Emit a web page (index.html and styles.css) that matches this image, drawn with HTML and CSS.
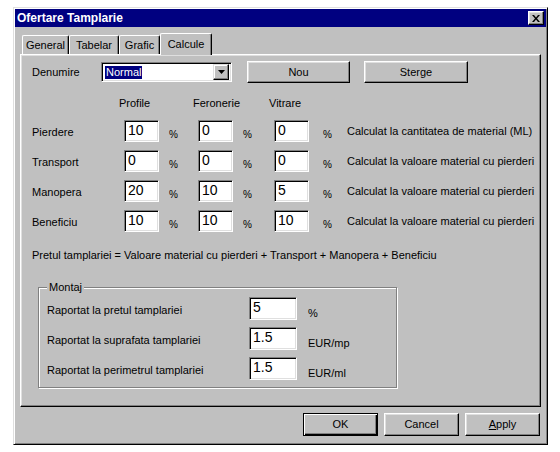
FILE: index.html
```html
<!DOCTYPE html>
<html>
<head>
<meta charset="utf-8">
<link rel="stylesheet" href="styles.css">
</head>
<body>
<div class="window">
  <div class="titlebar">
    <span class="title">Ofertare Tamplarie</span>
    <span class="close"><svg width="8" height="7" viewBox="0 0 8 7"><path d="M0 0h2l2 2.5L6 0h2L5 3.5 8 7H6L4 4.5 2 7H0l3-3.5z" fill="#000"/></svg></span>
  </div>
  <div class="main">
    <div class="tabs">
      <div class="tab t-general">General</div>
      <div class="tab t-tabelar">Tabelar</div>
      <div class="tab t-grafic">Grafic</div>
      <div class="tab t-calcule active">Calcule</div>
    </div>
    <div class="panel">
      <div class="toprow">
        <span class="den">Denumire</span>
        <div class="combo">
          <span class="sel">Normal</span>
          <span class="arrow"><svg width="7" height="4" viewBox="0 0 7 4"><path d="M0 0h7L3.5 4z" fill="#000"/></svg></span>
        </div>
        <div class="btn nou">Nou</div>
        <div class="btn sterge">Sterge</div>
      </div>
      <div class="grid">
        <span class="hd0"></span>
        <span class="hd c2">Profile</span>
        <span class="hd c4">Feronerie</span>
        <span class="hd c6">Vitrare</span>

        <span class="lbl">Pierdere</span>
        <div class="field">10</div><span class="pct">%</span>
        <div class="field">0</div><span class="pct p2">%</span>
        <div class="field">0</div><span class="pct p3">%</span>
        <span class="desc">Calculat la cantitatea de material (ML)</span>

        <span class="lbl">Transport</span>
        <div class="field">0</div><span class="pct">%</span>
        <div class="field">0</div><span class="pct p2">%</span>
        <div class="field">0</div><span class="pct p3">%</span>
        <span class="desc">Calculat la valoare material cu pierderi</span>

        <span class="lbl">Manopera</span>
        <div class="field">20</div><span class="pct">%</span>
        <div class="field">10</div><span class="pct p2">%</span>
        <div class="field">5</div><span class="pct p3">%</span>
        <span class="desc">Calculat la valoare material cu pierderi</span>

        <span class="lbl">Beneficiu</span>
        <div class="field">10</div><span class="pct">%</span>
        <div class="field">10</div><span class="pct p2">%</span>
        <div class="field">10</div><span class="pct p3">%</span>
        <span class="desc">Calculat la valoare material cu pierderi</span>
      </div>
      <div class="formula">Pretul tamplariei = Valoare material cu pierderi + Transport + Manopera + Beneficiu</div>
      <div class="group">
        <div class="legend">Montaj</div>
        <div class="mgrid">
          <span class="mlbl">Raportat la pretul tamplariei</span>
          <div class="field mfield">5</div>
          <span class="unit">%</span>
          <span class="mlbl">Raportat la suprafata tamplariei</span>
          <div class="field mfield">1.5</div>
          <span class="unit">EUR/mp</span>
          <span class="mlbl">Raportat la perimetrul tamplariei</span>
          <div class="field mfield">1.5</div>
          <span class="unit">EUR/ml</span>
        </div>
      </div>
    </div>
    <div class="buttons">
      <div class="btn dbtn default">OK</div>
      <div class="btn dbtn">Cancel</div>
      <div class="btn dbtn"><u>A</u>pply</div>
    </div>
  </div>
</div>
</body>
</html>
```
FILE: styles.css
```css
html, body {
  margin: 0;
  padding: 0;
  background: #fff;
}
body {
  font-family: "Liberation Sans", Arial, sans-serif;
  font-size: 11px;
  line-height: 13px;
  color: #000;
}
.window {
  margin: 7px 0 0 13px;
  width: 535px;
  height: 438px;
  box-sizing: border-box;
  background: #c0c0c0;
  border: 1px solid;
  border-color: #dfdfdf #000 #000 #dfdfdf;
  box-shadow: inset 1px 1px #fff, inset -1px -1px #808080;
  padding: 1px;
}
.titlebar {
  height: 18px;
  background: #000080;
  display: flex;
  align-items: center;
  justify-content: space-between;
  padding: 0 2px;
}
.title {
  color: #fff;
  font-weight: bold;
  font-size: 12px;
}
.close {
  width: 16px;
  height: 14px;
  box-sizing: border-box;
  background: #c0c0c0;
  border: 1px solid;
  border-color: #fff #000 #000 #fff;
  box-shadow: inset -1px -1px #808080, inset 1px 1px #dfdfdf;
  display: flex;
  align-items: center;
  justify-content: center;
}
.main {
  padding: 6px 5px 0 5px;
}
.tabs {
  display: flex;
  align-items: flex-end;
  height: 21px;
  padding-left: 2px;
}
.tab {
  height: 19px;
  box-sizing: border-box;
  border-top: 1px solid #fff;
  border-left: 1px solid #fff;
  border-right: 1px solid #000;
  border-radius: 2px 2px 0 0;
  box-shadow: inset -1px 0 #808080;
  display: flex;
  align-items: center;
  justify-content: center;
  padding-top: 1px;
  background: #c0c0c0;
}
.t-general { width: 47px; }
.t-tabelar { width: 50px; }
.t-grafic { width: 41px; }
.t-calcule { width: 52px; }
.tab.active {
  height: 22px;
  margin-bottom: -1px;
  position: relative;
  z-index: 1;
  padding-bottom: 2px;
}
.panel {
  height: 353px;
  box-sizing: border-box;
  border: 1px solid;
  border-color: #fff #000 #000 #fff;
  box-shadow: inset -1px -1px #808080, inset 1px 1px #dfdfdf;
  padding: 6px 0 0 11px;
}
.toprow {
  display: flex;
  align-items: center;
  height: 22px;
}
.den {
  width: 69px;
}
.combo {
  width: 131px;
  height: 20px;
  box-sizing: border-box;
  margin-right: 15px;
  background: #fff;
  border: 1px solid;
  border-color: #808080 #fff #fff #808080;
  box-shadow: inset 1px 1px #000, inset -1px -1px #dfdfdf;
  display: flex;
  align-items: center;
  justify-content: space-between;
  padding: 2px;
}
.sel {
  background: #000080;
  color: #fff;
  padding: 0 1px;
  margin-left: 1px;
  line-height: 13px;
}
.arrow {
  width: 16px;
  height: 16px;
  box-sizing: border-box;
  background: #c0c0c0;
  border: 1px solid;
  border-color: #dfdfdf #000 #000 #dfdfdf;
  box-shadow: inset -1px -1px #808080, inset 1px 1px #fff;
  display: flex;
  align-items: center;
  justify-content: center;
}
.btn {
  box-sizing: border-box;
  background: #c0c0c0;
  border: 1px solid;
  border-color: #fff #000 #000 #fff;
  box-shadow: inset -1px -1px #808080, inset 1px 1px #dfdfdf;
  display: flex;
  align-items: center;
  justify-content: center;
}
.nou {
  width: 103px;
  height: 22px;
  margin-right: 14px;
}
.sterge {
  width: 104px;
  height: 22px;
}
.grid {
  margin-top: 14px;
  display: grid;
  grid-template-columns: 92px 35px 39px 35px 41px 35px 38px auto;
  grid-template-rows: 15px repeat(4, 22px);
  row-gap: 8px;
}
.hd0 {
  grid-column: 1;
}
.hd {
  grid-row: 1;
  margin-left: -5px;
  white-space: nowrap;
}
.c2 { grid-column: 2 / span 2; }
.c4 { grid-column: 4 / span 2; }
.c6 { grid-column: 6 / span 2; }
.lbl {
  grid-column: 1;
  align-self: center;
  margin-top: 2px;
}
.field {
  box-sizing: border-box;
  background: #fff;
  border: 1px solid;
  border-color: #808080 #fff #fff #808080;
  box-shadow: inset 1px 1px #000, inset -1px -1px #dfdfdf;
  font-size: 14px;
  line-height: 16px;
  padding: 1px 0 0 3px;
  height: 22px;
}
.pct {
  align-self: center;
  margin-top: 7px;
  padding-left: 10px;
  font-size: 10px;
}
.p2 { padding-left: 10px; }
.p3 { padding-left: 14px; }
.desc {
  align-self: center;
  white-space: nowrap;
  margin-top: 1px;
}
.formula {
  margin-top: 17px;
}
.group {
  margin: 25px 0 0 6px;
  width: 359px;
  height: 101px;
  box-sizing: border-box;
  border: 1px solid #808080;
  box-shadow: 1px 1px 0 #fff, inset 1px 1px 0 #fff;
  padding-left: 8px;
}
.legend {
  width: fit-content;
  margin-top: -7px;
  background: #c0c0c0;
  padding: 0 2px;
}
.mgrid {
  margin-top: 3px;
  display: grid;
  grid-template-columns: 202px 48px auto;
  grid-template-rows: repeat(3, 23px);
  row-gap: 7px;
}
.mlbl {
  align-self: center;
  margin-top: 3px;
  white-space: nowrap;
}
.mfield {
  height: 23px;
}
.unit {
  align-self: center;
  margin-top: 10px;
  padding-left: 11px;
}
.buttons {
  display: flex;
  justify-content: flex-end;
  gap: 6px;
  margin-top: 6px;
  padding-right: 1px;
}
.dbtn {
  width: 75px;
  height: 23px;
}
.default {
  border-color: #000;
  box-shadow: inset 1px 1px #fff, inset -1px -1px #000, inset -2px -2px #808080;
}
u {
  text-decoration: underline;
}
```
